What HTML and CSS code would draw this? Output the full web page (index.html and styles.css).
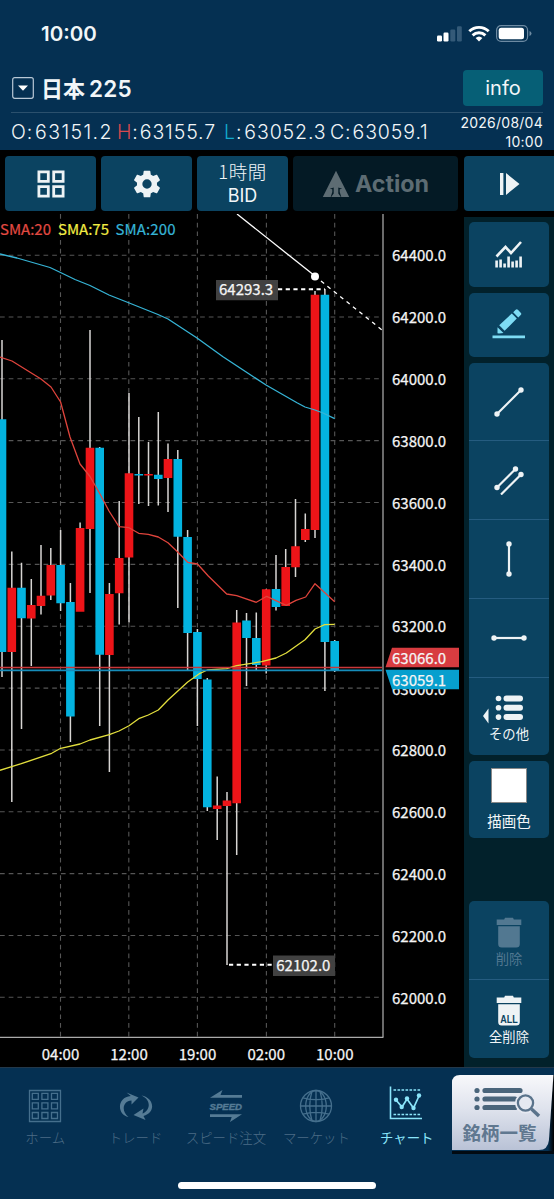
FILE: index.html
```
<!DOCTYPE html>
<html lang="ja">
<head>
<meta charset="utf-8">
<title>日本225 チャート</title>
<link rel="stylesheet" href="styles.css">
</head>
<body>
<div class="app">
  <header class="header">
    <div class="status">
      <span class="clock">10:00</span>
      <svg class="status-icons" width="98" height="20" viewBox="0 0 98 20">
        <g fill="#fff"><rect x="1" y="11.500" width="5" height="6" rx="1.200"/><rect x="7.500" y="8.500" width="5" height="9" rx="1.200"/></g>
        <g fill="#345a78"><rect x="14.300" y="5.500" width="5" height="12" rx="1.200"/><rect x="21" y="2.200" width="4.800" height="15.300" rx="1.200"/></g>
        <g fill="none" stroke="#fff" stroke-width="2.900"><path d="M33.300 7.300a14 14 0 0 1 19.400 0"/><path d="M36.600 11.400a9.200 9.200 0 0 1 12.800 0"/></g>
        <path d="M43 17.500l-3.400-3.500a5 5 0 0 1 6.800 0z" fill="#fff"/>
        <rect x="60.600" y="1.700" width="31" height="15.600" rx="4.500" fill="none" stroke="#6d8aa2" stroke-width="1.200"/>
        <rect x="62.700" y="3.800" width="25.300" height="11.400" rx="2.500" fill="#fff"/>
        <path d="M93.500 7v5q2-.6 2-2.500t-2-2.500z" fill="#6d8aa2"/>
      </svg>
    </div>
    <div class="symbol">
      <svg width="22" height="22" viewBox="0 0 22 22"><rect x=".7" y=".7" width="20.600" height="20.600" rx="2" fill="none" stroke="#b9c8d6" stroke-width="1.200"/><path d="M6 8.500h10l-5 5.200z" fill="#fff"/></svg>
      <h1 class="symbol-name">日本<b>225</b></h1>
      <button class="info">info</button>
    </div>
    <div class="quote">
      <div class="ohlc">
        <span class="o">O:<i>63151.2</i></span><span class="h"><em class="red">H</em>:<i>63155.7</i></span><span class="l"><em class="blue">L</em>:<i>63052.3</i></span><span class="c">C:<i>63059.1</i></span>
      </div>
      <div class="date">2026/08/04<br>10:00</div>
    </div>
  </header>

  <div class="toolbar">
    <button class="tool"><svg width="28" height="28" viewBox="0 0 28 28" fill="none" stroke="#eef3f5" stroke-width="2.800"><path d="M1.900 1.900h9.400v9.400H1.900zM16.700 1.900h9.400v9.400h-9.400zM1.900 16.700h9.400v9.400H1.900zM16.700 16.700h9.400v9.400h-9.400z"/></svg></button>
    <button class="tool"><svg width="32" height="32" viewBox="0 0 24 24" fill="#eef3f5"><path d="M19.430 12.980c.04-.32.07-.64.07-.98s-.03-.66-.07-.98l2.110-1.650c.19-.15.24-.42.12-.64l-2-3.460c-.12-.22-.39-.3-.61-.22l-2.490 1c-.52-.4-1.080-.73-1.690-.98l-.38-2.650C14.460 2.180 14.250 2 14 2h-4c-.25 0-.46.18-.49.42l-.38 2.650c-.61.25-1.170.59-1.690.98l-2.490-1c-.23-.09-.49 0-.61.22l-2 3.460c-.13.22-.07.49.12.64l2.110 1.650c-.04.32-.07.65-.07.98s.03.66.07.98l-2.110 1.650c-.19.15-.24.42-.12.64l2 3.460c.12.22.39.3.61.22l2.490-1c.52.4 1.080.73 1.690.98l.38 2.650c.03.24.24.42.49.42h4c.25 0 .46-.18.49-.42l.38-2.650c.61-.25 1.170-.59 1.690-.98l2.490 1c.23.09.49 0 .61-.22l2-3.460c.12-.22.07-.49-.12-.64zM12 15.500a3.500 3.500 0 1 1 0-7 3.500 3.500 0 0 1 0 7z"/></svg></button>
    <button class="tool period"><span>1時間</span><span class="bid">BID</span></button>
    <button class="tool action"><svg width="28" height="28" viewBox="0 0 28 28" fill="#5d6c73"><path d="M14 .8L27.200 27H.8z"/><path fill="#041a25" d="M7.800 18.800L11.700 17.600V23.500L9 27.200H8.600L10.300 22V19.200zM20.200 18.800L16.300 17.600V23.500L19 27.200H19.400L17.700 22V19.200z"/></svg><span>Action</span></button>
    <button class="tool step"><svg width="20" height="22" viewBox="0 0 20 22" fill="#eef3f5"><path d="M0 0h3.400v22H0zM6 0l13.500 11L6 22z"/></svg></button>
  </div>

  <main class="workspace">
    <svg class="chart" viewBox="0 214 464 853">
      <g class="grid">
        <path d="M0 255.200H382M0 317H382M0 378.800H382M0 440.600H382M0 502.500H382M0 564.400H382M0 626.200H382M0 688.100H382M0 750H382M0 811.800H382M0 873.600H382M0 935.500H382M0 997.300H382"/>
        <path d="M60.500 214V1037M128.800 214V1037M197.400 214V1037M266.400 214V1037M334.700 214V1037"/>
      </g>
      <path class="wicks" d="M2 340V677M11.800 551.500V802M21.500 562.700V729M31.300 579V666M41 545V614.500M50.800 548V600M60.600 530V611M70.400 583V742M80.100 522.500V611M90 330V593M99.700 447V726M109.400 583V772M119.200 501V624.500M129 393V622.500M138.800 417V504M148.500 442V506M158.300 412V505.500M168 443.500V512M177.800 450V608M187.600 530V670M197.400 629V726M207.300 678V811M217.200 776.500V840M227 792V965M236.700 610V855M246.500 613V686M256.300 612.500V670M266.200 589V673.500M276 555V610.500M285.700 549V606M295.500 499V577M305.300 513.500V542M315 291V538M324.900 289V691M334.700 640V672"/>
      <path class="up" d="M11.800 587.700V652M31.300 605V618.500M41 595.700V606M50.800 565V595.600M80.100 528V611.700M90 447.700V529M109.400 594V655M119.200 558V593.300M129 473.300V557.500M148.500 473.900V475.600M168 459V478M217.200 805.600V809M227 800.500V806M236.700 622.600V803.300M266.200 589.200V665.500M285.700 567V606M295.500 546.300V567.300M305.300 529V540M315 294.800V530"/>
      <path class="down" d="M2 419.300V652M21.500 587.700V618.300M60.600 565V603.300M70.400 602V716.500M99.700 447.700V654.700M138.800 473.900V475.600M158.300 474.700V479M177.800 459V536.700M187.600 537V633M197.400 632V679M207.300 679.600V807.300M246.500 620.500V638M256.300 638V665M276 589V607M324.900 294.800V642M334.700 641V670"/>
      <g class="average">
        <path stroke="#36b4d6" d="M0 254L17 258 50 267.500 60.500 272.500 75 279.500 90 285.500 109 295 128 302.500 158 314.500 168 319 197 338 223 356.700 266 385 297 402.700 305 407 315 410 323 413 334.700 418.700"/>
        <path stroke="#df443c" d="M0 357L12 361 41 379 51 387 60.600 402 70 437 80 464 90 476.500 100 494 109 511 119 526.700 129 527.700 138.700 533.300 148.300 534.300 158.300 537 168 542.700 177.700 552 187.700 562.300 197.500 564 208.300 576 226.700 594 236.700 595.700 256.300 602.300 266.700 596.300 286.300 605.300 296 600.300 305.700 597 315 583.700 334.700 601.700"/>
        <path stroke="#e2de3d" d="M0 770.300L11.700 766.700 21.300 763.700 51.700 753.300 60.700 748.300 80 744 90 740 109.300 734.700 119 731 129 725.700 138.700 718.700 148.300 715 158.300 710 168 700 187.700 682 200 673.300 207.300 670 226.700 668.700 236.700 665.700 261.700 661.700 276 658 286.300 653 305 639.700 315 629 324.700 624.700 334.700 624.300"/>
      </g>
      <path stroke="#c8383b" stroke-width="1.500" d="M0 667.500H382"/>
      <path stroke="#168dba" stroke-width="1.700" d="M0 670.300H382"/>
      <g fill="none" stroke="#fff">
        <path stroke-width="1.300" d="M237 214L315 276"/>
        <path stroke-width="1.300" stroke-dasharray="4 4.200" d="M321 281L382 330"/>
        <path stroke-width="1.900" stroke-dasharray="4.200 3.500" d="M278 289.200H325M229 964.800H273"/>
      </g>
      <circle cx="315" cy="276.400" r="4" fill="#fff"/>
      <path d="M383 214V1037" stroke="#777" stroke-width="1.800"/>
      <path d="M0 1037.300H383.500" stroke="#aaa" stroke-width="1.200"/>
      <path fill="#414141" d="M216 280h62v20.300h-62zM273 955.600h62V976h-62z"/>
      <g class="axis">
        <text x="219" y="295.400">64293.3</text><text x="276.300" y="971.200">62102.0</text>
        <text x="392" y="261.400">64400.0</text><text x="392" y="323.400">64200.0</text><text x="392" y="385.200">64000.0</text><text x="392" y="446.800">63800.0</text><text x="392" y="509">63600.0</text><text x="392" y="570.800">63400.0</text><text x="392" y="632.400">63200.0</text><text x="392" y="695">63000.0</text><text x="392" y="756.400">62800.0</text><text x="392" y="818.400">62600.0</text><text x="392" y="880">62400.0</text><text x="392" y="941.800">62200.0</text><text x="392" y="1004">62000.0</text>
        <path fill="#d83c40" stroke="none" d="M385.500 667.300L392 647.700H459V667.300z"/>
        <path fill="#079fce" stroke="none" d="M385.500 669.700H459V689.200H392z"/>
        <text x="392" y="664.200">63066.0</text><text x="392" y="686.200">63059.1</text>
        <g text-anchor="middle"><text x="60.500" y="1060">04:00</text><text x="129" y="1060">12:00</text><text x="197.500" y="1060">19:00</text><text x="266.300" y="1060">02:00</text><text x="334.800" y="1060">10:00</text></g>
      </g>
      <g class="legend"><text x="0" y="235.400" fill="#e34a42" stroke="#e34a42" textLength="51">SMA:20</text><text x="58" y="235.400" fill="#f2ed43" stroke="#f2ed43" textLength="51">SMA:75</text><text x="115.500" y="235.400" fill="#36b4d6" stroke="#36b4d6" textLength="60">SMA:200</text></g>
    </svg>

    <aside class="sidebar">
      <div class="panel single"><svg width="30" height="30" viewBox="0 0 30 30"><path d="M2.500 17.500L11.500 8l5.500 6L27 3" fill="none" stroke="#eef3f5" stroke-width="2.600"/><path stroke="#eef3f5" stroke-width="2.600" d="M2.600 28.500v-7M6.600 28.500v-8M10.600 28.500v-4M14.600 28.500v-11M18.600 28.500v-6M22.600 28.500v-7M26.600 28.500v-11"/></svg></div>
      <div class="panel single pencil"><svg width="34" height="30" viewBox="0 0 34 30" fill="#7edcf4"><path d="M.5 26.500h32.500v2.800H.5zM5.500 24.300v-6l6 5.600-4.500.6zM7.200 16.200L19.800 4.600l5 5L12.600 21.800zM21.200 3.200l2.500-2.400q1.200-1 2.400.2l2.600 2.700q1.200 1.200 0 2.400l-2.400 2.300z"/></svg></div>
      <div class="panel stack">
        <div class="cell"><svg width="30" height="30" viewBox="0 0 30 30"><path d="M3 27L27 3" class="line"/><circle cx="3" cy="27" r="2.700"/><circle cx="27" cy="3" r="2.700"/></svg></div>
        <div class="cell"><svg width="30" height="30" viewBox="0 0 30 30"><path d="M3 22.500L21.500 4M7 29.500L27 9.500" class="line"/><circle cx="3" cy="22.500" r="2.700"/><circle cx="21.500" cy="4" r="2.700"/><circle cx="27" cy="9.500" r="2.700"/></svg></div>
        <div class="cell"><svg width="8" height="36" viewBox="0 0 8 36"><path d="M4 3V33" class="line"/><circle cx="4" cy="3" r="2.700"/><circle cx="4" cy="33" r="2.700"/></svg></div>
        <div class="cell"><svg width="36" height="8" viewBox="0 0 36 8"><path d="M3 4H33" class="line"/><circle cx="3" cy="4" r="2.700"/><circle cx="33" cy="4" r="2.700"/></svg></div>
        <div class="cell others"><svg width="52" height="30" viewBox="0 0 52 30"><path d="M5.500 14.500v15L0 22z"/><circle cx="15.500" cy="4.500" r="2.800"/><circle cx="15.500" cy="13.800" r="2.800"/><circle cx="15.500" cy="23.100" r="2.800"/><rect x="20.500" y="1.500" width="19.500" height="6" rx="3"/><rect x="20.500" y="10.800" width="19.500" height="6" rx="3"/><rect x="20.500" y="20.100" width="19.500" height="6" rx="3"/></svg><span>その他</span></div>
      </div>
      <div class="panel color"><i class="swatch"></i><span>描画色</span></div>
      <div class="panel stack erase">
        <div class="cell trash off"><svg width="26" height="31" viewBox="0 0 26 31"><path d="M.7 2.500h7.500L9 .8h8l.8 1.700h7.500V8H.7zM2.200 9.200h21.600V27q0 3.500-3.500 3.500H5.700q-3.500 0-3.500-3.500z"/></svg><span>削除</span></div>
        <div class="cell trash"><svg width="26" height="31" viewBox="0 0 26 31"><path d="M.7 2.500h7.500L9 .8h8l.8 1.700h7.500V8H.7zM2.200 9.200h21.600V27q0 3.500-3.500 3.500H5.700q-3.500 0-3.500-3.500z"/><text x="4.300" y="27.500" textLength="17.500" lengthAdjust="spacingAndGlyphs">ALL</text></svg><span>全削除</span></div>
      </div>
    </aside>
  </main>

  <footer class="footer">
    <nav class="tabs">
      <a class="tab"><svg width="34" height="34" viewBox="0 0 34 34" class="tab-line"><path d="M1.500 1.500h31v31h-31zM4.300 4.300h6v6h-6zM13.900 4.300h6v6h-6zM23.500 4.300h6v6h-6zM4.300 13.900h6v6h-6zM13.900 13.900h6v6h-6zM23.500 13.900h6v6h-6zM4.300 23.500h6v6h-6zM13.900 23.500h6v6h-6zM23.500 23.500h6v6h-6z"/></svg><span>ホーム</span></a>
      <a class="tab"><svg width="34" height="34" viewBox="0 0 34 34" class="tab-fill"><path d="M9.500 28C-2.500 25.500-2 8 11.800 7L7.500 3.500 19.500 8.500 12.500 15.500V11.500C3.500 12 2 22.500 9.500 28z"/><path d="M14.500 26L24.500 19.500 23.500 24.500C31.500 21 32.500 11 22.500 6.500 35 8.500 37.500 23.500 24.500 27L26.500 31z"/></svg><span>トレード</span></a>
      <a class="tab"><svg width="34" height="34" viewBox="0 0 34 34" class="tab-fill"><path d="M1 8.700L13.500 1l-2 5H33v2.700zM33 25.300L21 33l1.700-5H1v-2.700z"/><text x=".5" y="20.600" textLength="32.500" lengthAdjust="spacingAndGlyphs">SPEED</text></svg><span>スピード注文</span></a>
      <a class="tab"><svg width="34" height="34" viewBox="0 0 34 34" class="tab-line"><circle cx="17" cy="17" r="15.500"/><ellipse cx="17" cy="17" rx="10.300" ry="15.500"/><path d="M17 1.500v31M1.500 17h31M4 8.800q13 3.800 26 0M4 25.200q13-3.800 26 0M13 2Q8.500 17 13 32M21 2q4.500 15 0 30"/></svg><span>マーケット</span></a>
      <a class="tab active"><svg width="34" height="34" viewBox="0 0 34 34"><path d="M1.500 .5V32.500H33" fill="none" stroke="#8be5fa" stroke-width="1.600"/><path d="M4.500 4h28M4.500 28.500h28" stroke="#8be5fa" stroke-width="1.500" stroke-dasharray="2.600 1.400"/><path d="M7 14L13 21 18 13 24.500 22 30 10" fill="none" stroke="#8be5fa" stroke-width="1.700"/><g fill="#8be5fa"><circle cx="7" cy="13.800" r="2.200"/><circle cx="12.700" cy="21" r="2.200"/><circle cx="18" cy="12.500" r="2.200"/><circle cx="24.500" cy="22" r="2.200"/><circle cx="30" cy="9.500" r="2.200"/></g></svg><span>チャート</span></a>
      <a class="list"><span class="list-face"><svg width="68" height="32" viewBox="0 0 68 32" fill="#4a657b"><circle cx="4" cy="4.500" r="2.600"/><circle cx="4" cy="13" r="2.600"/><circle cx="4" cy="21.500" r="2.600"/><path d="M12 4.500H47M12 13H42M12 21.500H42" stroke="#4a657b" stroke-width="5.200" stroke-linecap="round"/><circle cx="52.500" cy="17" r="10.500" fill="#e6e9f1"/><path d="M58.500 23L66 30" stroke="#5a738b" stroke-width="3.500"/><circle cx="52.500" cy="17" r="7.600" fill="#e6e9f1" stroke="#5a738b" stroke-width="2.300"/></svg><span>銘柄一覧</span></span></a>
    </nav>
    <div class="home-bar"></div>
  </footer>
</div>
</body>
</html>
```
FILE: styles.css
```
* { box-sizing: border-box; }
body { margin: 0; background: #000; font-family: "Noto Sans CJK JP", sans-serif; color: #f2f6f8; }
button { border: 0; padding: 0; color: inherit; font: inherit; }
svg { display: block; flex: none; }
.app { width: 554px; height: 1199px; display: flex; flex-direction: column; overflow: hidden; }

.header { height: 150px; background: #053052; flex: none; }
.status { height: 67px; padding: 0 23px 0 41px; display: flex; justify-content: space-between; align-items: center; }
.clock { font: 600 20.5px Inter, sans-serif; letter-spacing: 0; }
.status-icons { width: 98px; margin-right: -3px; }
.symbol { height: 46px; margin: 0 11px; padding: 0 0 4px 1px; border-bottom: 1px solid #2b506d; display: flex; align-items: center; }
.symbol-name { margin: 0 0 0 7px; flex: 1; font-size: 22px; line-height: 38px; font-weight: 700; }
.symbol-name b { font-family: Inter, sans-serif; font-size: 22.5px; font-weight: 600; margin-left: 4px; letter-spacing: .2px; }
.info { width: 80px; height: 36px; border-radius: 4px; background: #065f76; font: 20px Inter, sans-serif; }
.quote { height: 37px; display: flex; justify-content: space-between; padding: 0 11px; }
.ohlc { display: flex; align-items: center; font: 300 19.5px/38px Inter, sans-serif; white-space: nowrap; letter-spacing: .9px; }
.ohlc span { display: flex; }
.ohlc i { font-style: normal; margin-left: 2px; }
.ohlc em { font-style: normal; }
.ohlc .o { width: 106px; }
.ohlc .h { width: 107px; }
.ohlc .h i { margin-left: 1px; }
.ohlc .l { width: 106px; }
.ohlc .o i { letter-spacing: 1.400px; }
.ohlc .c i { margin-left: 1px; }
.red { color: #d8494e; }
.blue { color: #13a9cc; }
.date { font: 14px/19px Inter, sans-serif; text-align: right; letter-spacing: .25px; white-space: nowrap; }

.toolbar { height: 64px; flex: none; padding: 6px 0 3px 5px; display: grid; grid-template-columns: 91px 91px 91px 165px 96px; gap: 5px; }
.tool { border-radius: 4px; background: #0b4361; display: flex; align-items: center; justify-content: center; }
.period { flex-direction: column; font-size: 18.500px; line-height: 25px; font-weight: 300; letter-spacing: .6px; padding-bottom: 2px; }
.bid { font: 18px/23px Inter, sans-serif; letter-spacing: 0; }
.action { background: #041a25; color: #5d6c73; gap: 5px; font: 700 23.300px Inter, sans-serif; }
.step { border-radius: 4px 0 0 4px; padding-right: 4px; margin-left: 1px; }

.workspace { height: 853px; flex: none; display: flex; }
.chart { width: 464px; height: 853px; }
.grid path { stroke: #565656; stroke-width: 1.1; stroke-dasharray: 4.700 4; fill: none; }
.wicks { stroke: #d7d5d3; stroke-width: 1.500; }
.up, .down { stroke-width: 8.600; }
.up { stroke: #ed1418; }
.down { stroke: #03b3e0; }
.average path { fill: none; stroke-width: 1.300; stroke-linejoin: round; }
.axis { font-size: 15px; fill: #f5f5f5; stroke: #f5f5f5; stroke-width: .25; }
.legend { font-size: 15px; stroke-width: .2; }

.sidebar { width: 90px; margin-top: 3px; background: #02212b; padding: 5px 5px 9px; display: flex; flex-direction: column; gap: 6px; }
.panel { width: 80px; border-radius: 5px; background: #0b4361; display: flex; align-items: center; justify-content: center; flex: none; font-weight: 400; }
.single { height: 64.500px; }
.pencil svg { margin-top: -1px; margin-left: -1px; }
.stack { flex-direction: column; }
.cell { height: 79px; width: 100%; display: flex; flex-direction: column; align-items: center; justify-content: center; border-bottom: 1px solid #255c80; }
.cell:first-child { height: 78px; }
.cell:last-child { border-bottom: 0; height: 77px; }
.cell svg { fill: #eef3f5; margin-right: 1px; }
.line { stroke: #eef3f5; stroke-width: 2.200; fill: none; }
.others { padding-top: 5px; }
.others span { font-size: 13.300px; line-height: 20px; }
.color { height: 77px; flex-direction: column; font-size: 14.500px; line-height: 20px; }
.swatch { width: 36px; height: 35px; background: #fff; border: 1px solid #888; margin-bottom: 8px; }
.erase { margin-top: auto; height: 157px; }
.trash { font-size: 13.300px; line-height: 20px; padding-top: 4px; }
.trash svg { margin-bottom: 1px; }
.trash text { fill: #0b4361; font: 700 11px "Liberation Sans", sans-serif; }
.off { color: #527891; }
.off svg { fill: #527891; }

.footer { height: 132px; flex: none; background: #053052; border-top: 1px solid #23384a; }
.tabs { height: 86px; display: flex; }
.tab { width: 90.400px; padding-top: 21px; display: flex; flex-direction: column; align-items: center; color: #4c6c86; font-size: 13.400px; font-weight: 300; white-space: nowrap; }
.tab span { line-height: 20px; margin-top: 4px; }
.tab-line { fill: none; stroke: #456f8d; stroke-width: 1.300; }
.tab-fill { fill: #557b95; }
.tab-fill text { font: italic 700 9px "Liberation Sans", sans-serif; stroke: #557b95; stroke-width: .4; }
.active { color: #8be5fa; font-weight: 400; padding-top: 18px; }
.active span { margin-top: 7px; }
.active svg { margin-right: 2px; }
.list { width: 102px; height: 79px; margin-top: 7px; background: linear-gradient(90deg, #053052 0 94%, #000 100%); border-bottom: 3px solid #020a12; }
.list-face { height: 75px; display: flex; flex-direction: column; align-items: center; padding-top: 11px; background: linear-gradient(#f8f8fb, #dfe3ed 45%, #b9c2d6); clip-path: path("M0 8Q0 0 8 0H101.500L97 65Q96 75 87 75H0z"); color: #607890; }
.list-face > svg { margin-left: 9px; }
.list-face > span { font-size: 18.500px; line-height: 25px; font-weight: 700; margin-right: 7px; margin-top: 2px; }
.home-bar { width: 198px; height: 7px; margin: 28px auto 0; border-radius: 4px; background: #fff; }
```
